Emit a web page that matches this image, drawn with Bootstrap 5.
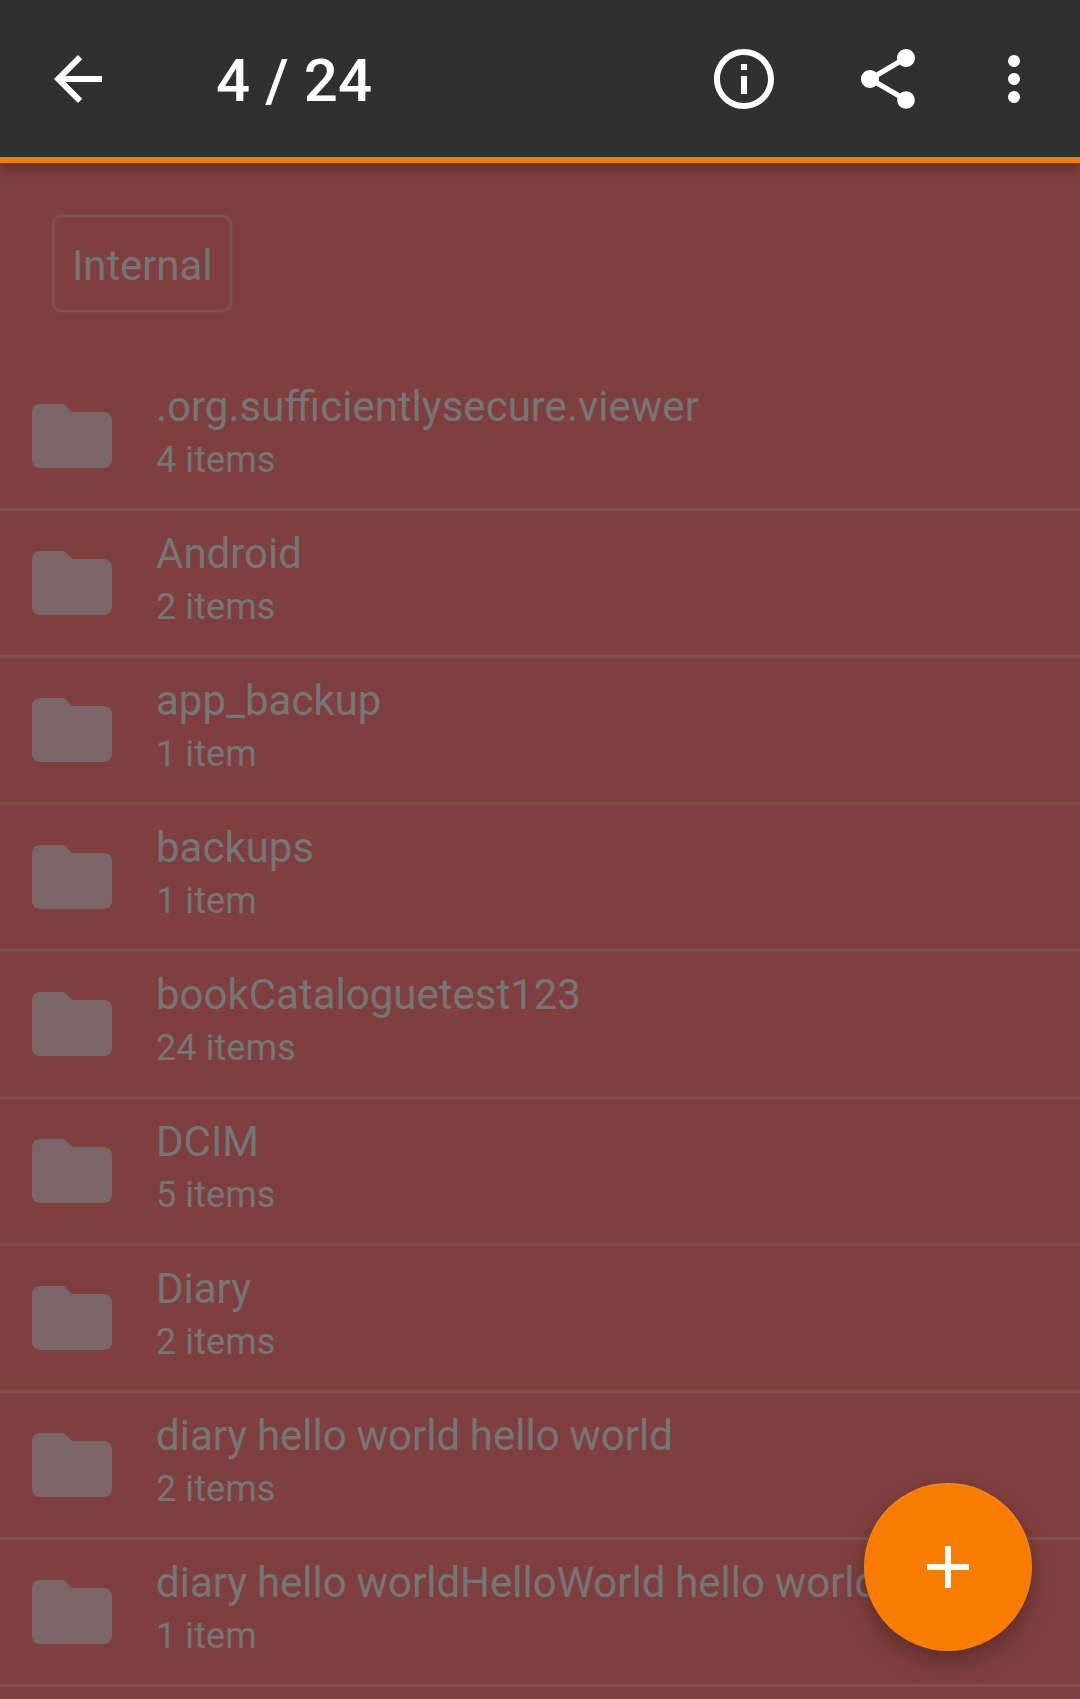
<!DOCTYPE html>
<html lang="en">
<head>
<meta charset="utf-8">
<meta name="viewport" content="width=device-width, initial-scale=1">
<title>Files</title>
<link rel="stylesheet" href="https://cdn.jsdelivr.net/npm/bootstrap@5.3.0/dist/css/bootstrap.min.css">
<style>
body{font-family:Roboto,"Liberation Sans",sans-serif;background:#803f3f;color:#757676}
.screen{height:1699px}
.topbar{height:163px;padding:0 30px 0 42px;background:#303030;border-bottom:6px solid #f77c00;box-shadow:0 5px 14px rgba(0,0,0,.3);z-index:2}
.topbar .btn{line-height:0;color:#fff}
.glyph{width:72px;height:72px;fill:currentColor}
.counter{font-size:60px;font-weight:500;line-height:72px;color:#fff;margin-left:102px;padding-top:5px;letter-spacing:.1px}
.actions{gap:72px}
.more{margin-left:-18px}
.crumbs{height:201px;padding:52px 0 0 52px}
.crumb{height:97px;width:180px;font-size:42px;line-height:63px;letter-spacing:-.1px;padding:17px 0 0 18px;border:2px solid #7e5453;border-radius:9px;box-shadow:0 0 3px #7e5453,inset 0 0 3px #7e5453}
.list-group-item.entry{height:147px;background:transparent;color:inherit;border:0;border-bottom:3px solid #805050;padding:0 0 0 24px}
.list-group-flush>.list-group-item.entry:last-child{border-bottom-width:3px}
.folder{width:96px;height:96px;margin-top:24px;fill:#7a6666}
.labels{margin-left:36px;padding-top:14px;white-space:nowrap}
.title{font-size:42px;line-height:57px;word-spacing:-.7px}
.count{font-size:36px;line-height:50px;letter-spacing:.08px}
.fab{right:48px;bottom:48px;width:168px;height:168px;background:#f77c00;color:#fff;box-shadow:0 12px 24px rgba(0,0,0,.24),0 0 8px rgba(0,0,0,.06),inset 0 1px 2px rgba(255,255,255,.18)}
</style>
</head>
<body>
<svg class="d-none"><symbol id="folder" viewBox="0 0 24 24"><path d="M10 4H4c-1.1 0-1.99.9-1.99 2L2 18c0 1.1.9 2 2 2h16c1.1 0 2-.9 2-2V8c0-1.1-.9-2-2-2h-8l-2-2z"/></symbol></svg>
<div class="screen position-relative overflow-hidden">
<header class="topbar position-relative d-flex align-items-center">
<button class="btn p-0 border-0" aria-label="Back"><svg class="glyph" viewBox="0 0 24 24"><path d="M20 11H7.83l5.59-5.59L12 4l-8 8 8 8 1.41-1.41L7.83 13H20v-2z"/></svg></button>
<div class="counter">4 / 24</div>
<div class="actions d-flex ms-auto">
<button class="btn p-0 border-0" aria-label="Info"><svg class="glyph" viewBox="0 0 24 24"><path d="M11 17h2v-6h-2v6zm1-15C6.48 2 2 6.48 2 12s4.48 10 10 10 10-4.48 10-10S17.52 2 12 2zm0 18c-4.41 0-8-3.59-8-8s3.59-8 8-8 8 3.59 8 8-3.59 8-8 8zM11 9h2V7h-2v2z"/></svg></button>
<button class="btn p-0 border-0" aria-label="Share"><svg class="glyph" viewBox="0 0 24 24"><path d="M18 16.08c-.76 0-1.44.3-1.96.77L8.91 12.7c.05-.23.09-.46.09-.7s-.04-.47-.09-.7l7.05-4.11c.54.5 1.25.81 2.04.81 1.66 0 3-1.34 3-3s-1.34-3-3-3-3 1.34-3 3c0 .24.04.47.09.7L8.04 9.81C7.5 9.31 6.79 9 6 9c-1.66 0-3 1.34-3 3s1.34 3 3 3c.79 0 1.5-.31 2.04-.81l7.12 4.16c-.05.21-.08.43-.08.65 0 1.61 1.31 2.92 2.92 2.92s2.92-1.31 2.92-2.92-1.31-2.92-2.92-2.92z"/></svg></button>
<button class="btn p-0 border-0 more" aria-label="More"><svg class="glyph" viewBox="0 0 24 24"><circle cx="12" cy="6" r="2"/><circle cx="12" cy="12" r="2"/><circle cx="12" cy="18" r="2"/></svg></button>
</div>
</header>
<main>
<div class="crumbs"><div class="crumb">Internal</div></div>
<div class="list-group list-group-flush">
<div class="list-group-item entry d-flex"><svg class="folder"><use href="#folder"/></svg><div class="labels"><div class="title">.org.sufficientlysecure.viewer</div><div class="count">4 items</div></div></div>
<div class="list-group-item entry d-flex"><svg class="folder"><use href="#folder"/></svg><div class="labels"><div class="title">Android</div><div class="count">2 items</div></div></div>
<div class="list-group-item entry d-flex"><svg class="folder"><use href="#folder"/></svg><div class="labels"><div class="title">app_backup</div><div class="count">1 item</div></div></div>
<div class="list-group-item entry d-flex"><svg class="folder"><use href="#folder"/></svg><div class="labels"><div class="title">backups</div><div class="count">1 item</div></div></div>
<div class="list-group-item entry d-flex"><svg class="folder"><use href="#folder"/></svg><div class="labels"><div class="title">bookCataloguetest123</div><div class="count">24 items</div></div></div>
<div class="list-group-item entry d-flex"><svg class="folder"><use href="#folder"/></svg><div class="labels"><div class="title">DCIM</div><div class="count">5 items</div></div></div>
<div class="list-group-item entry d-flex"><svg class="folder"><use href="#folder"/></svg><div class="labels"><div class="title">Diary</div><div class="count">2 items</div></div></div>
<div class="list-group-item entry d-flex"><svg class="folder"><use href="#folder"/></svg><div class="labels"><div class="title">diary hello world hello world</div><div class="count">2 items</div></div></div>
<div class="list-group-item entry d-flex"><svg class="folder"><use href="#folder"/></svg><div class="labels"><div class="title">diary hello worldHelloWorld hello world</div><div class="count">1 item</div></div></div>
</div>
</main>
<button class="fab btn rounded-circle border-0 p-0 position-absolute d-flex align-items-center justify-content-center" aria-label="Add"><svg class="glyph" viewBox="0 0 24 24"><path d="M19 13h-6v6h-2v-6H5v-2h6V5h2v6h6v2z"/></svg></button>
</div>
<script src="https://cdn.jsdelivr.net/npm/bootstrap@5.3.0/dist/js/bootstrap.bundle.min.js"></script>
</body>
</html>
